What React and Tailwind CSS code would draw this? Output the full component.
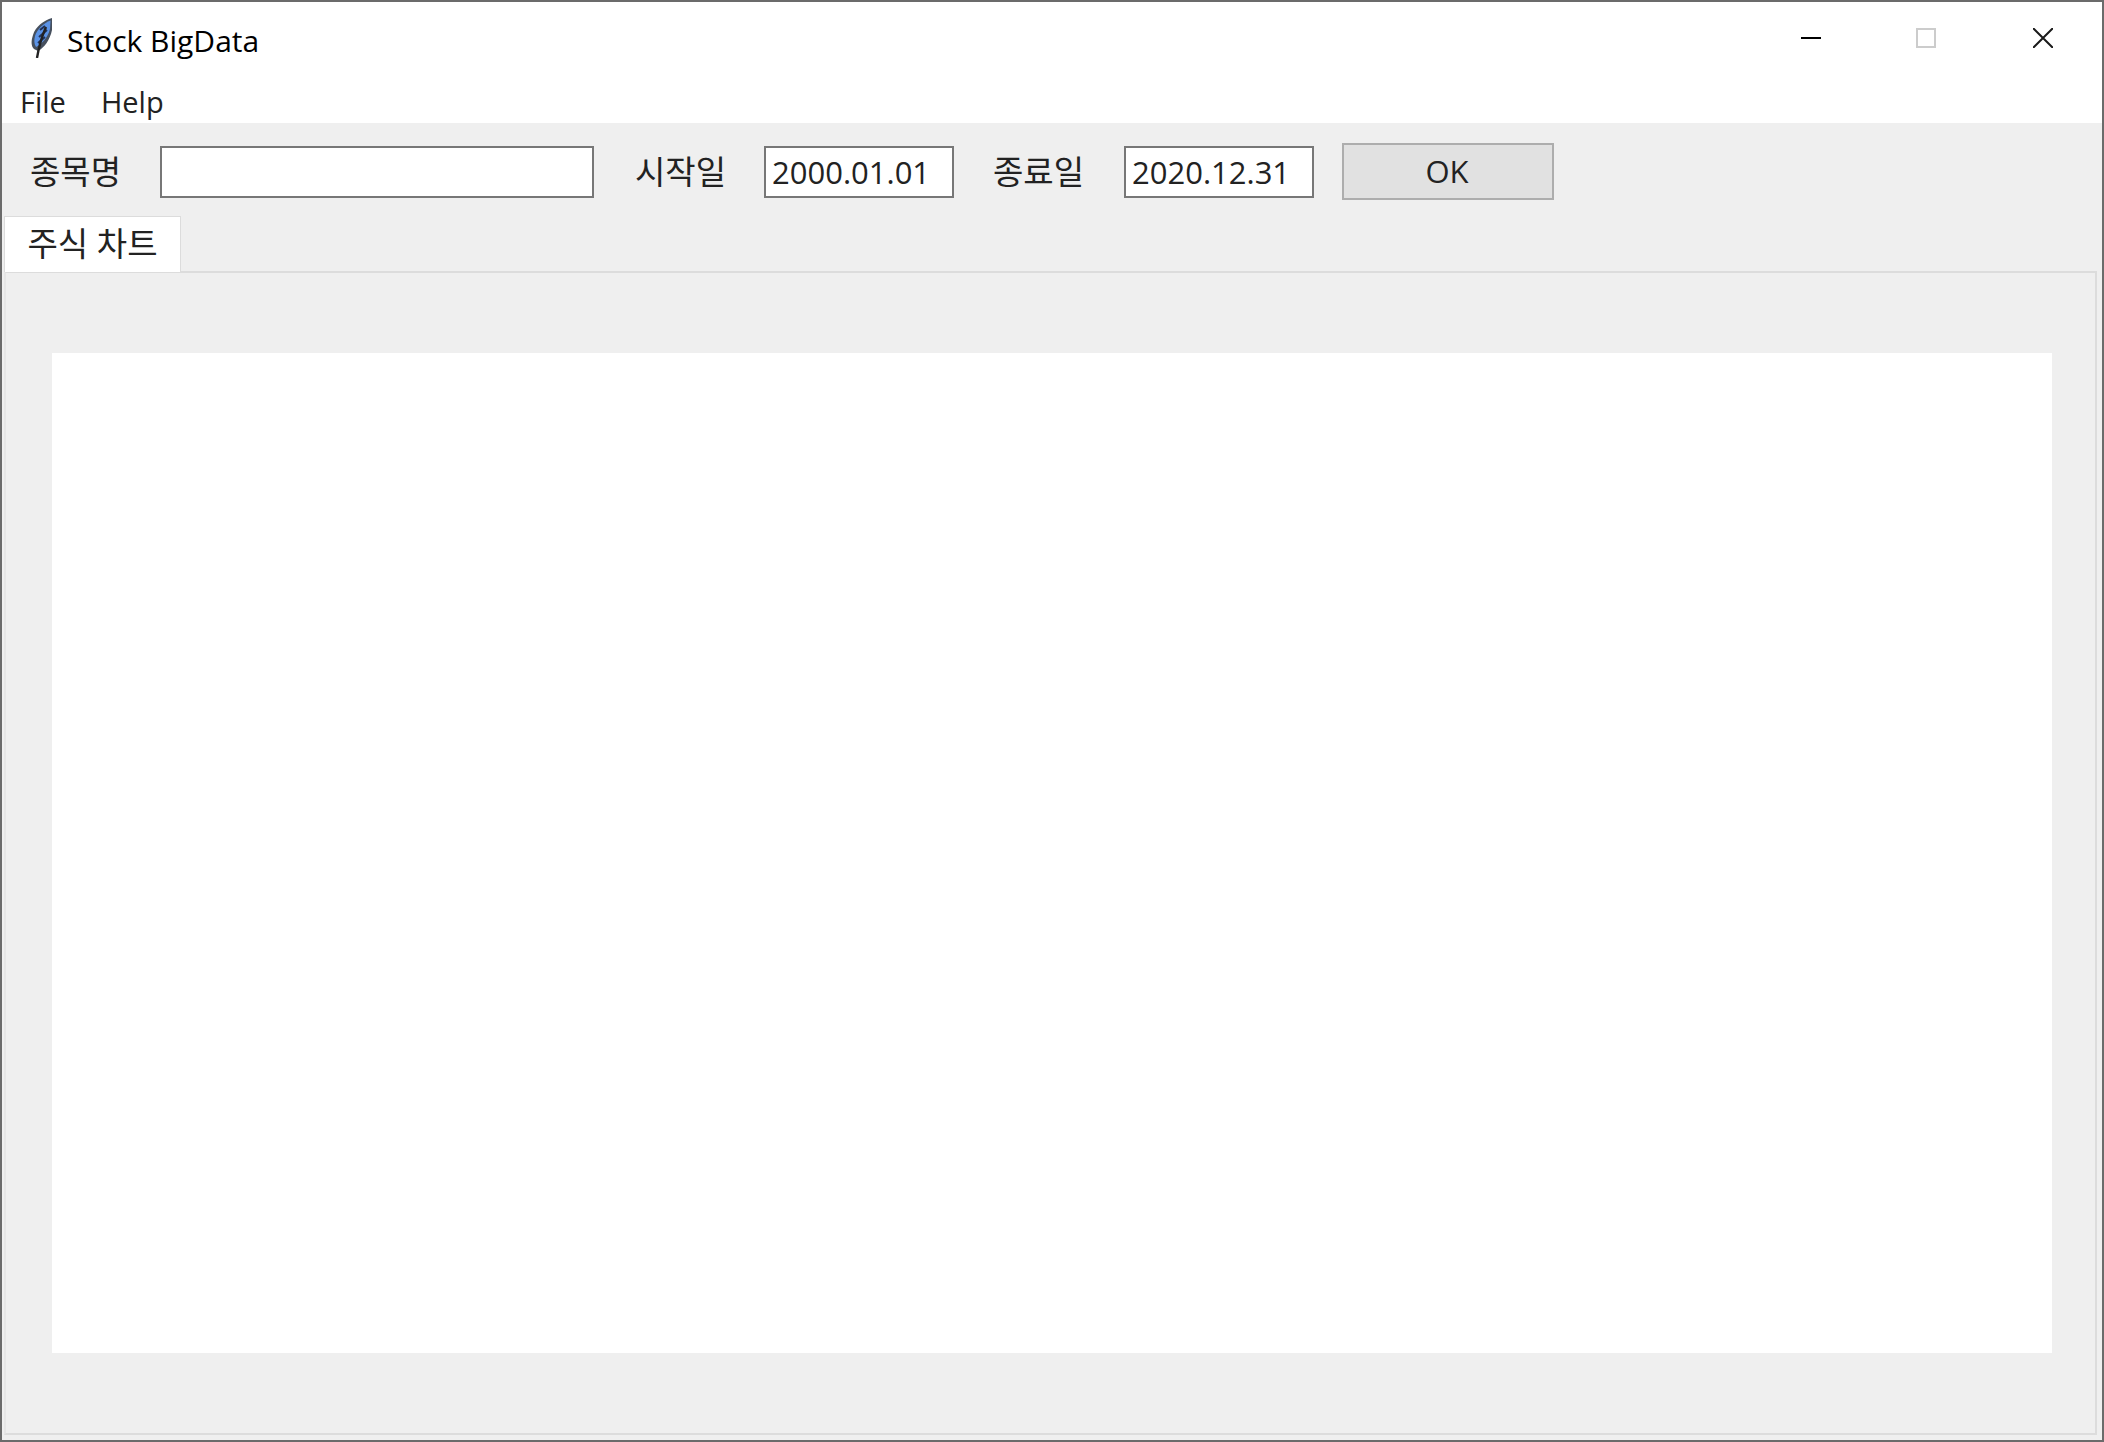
const FONT = "font-['Open_Sans','Noto_Sans_CJK_KR',sans-serif]";

function Feather() {
  return (
    <svg className="w-[22px] h-[40px] shrink-0 -mt-[7px]" viewBox="0 0 22 40">
      <path d="M21 0 C13 2 4 9 2 17 C0 23 0 28 3 31 L7 33 C13 30 19 22 21 12 Z" fill="#46505e" />
      <path d="M19.5 2.5 C13 5 6 11 4 18 C3 22 3 26 5 29 C11 26 17 19 19 11 Z" fill="#5b93e6" />
      <path d="M14 8 L9 12 M16 12 L8 19 M14 19 L7 25" stroke="#1f3158" strokeWidth="2" fill="none" />
      <path d="M15 9 C11 18 8 28 6 40" stroke="#222" strokeWidth="2.4" fill="none" />
    </svg>
  );
}

function Field({ value, className }) {
  return (
    <input
      readOnly
      value={value}
      className={`h-[52px] bg-white border-2 border-[#777777] pl-[6px] text-[31px] text-[#222] outline-none ${FONT} ${className}`}
    />
  );
}

export default function App() {
  return (
    <div className={`w-[2104px] h-[1442px] flex flex-col bg-[#efefef] border-2 border-[#6b6b6b] overflow-hidden ${FONT}`}>
      {/* Title bar */}
      <div className="h-[59px] bg-white flex items-center pl-[29px] pt-[20px] shrink-0">
        <Feather />
        <span className="ml-[14px] -mt-[2px] text-[30px] leading-[39px] text-black">Stock BigData</span>
        <div className="ml-auto flex items-center h-[20px] mr-[49px] -mt-[7px]">
          <svg className="w-[20px] h-[20px]" viewBox="0 0 20 20">
            <path d="M0 10H20" stroke="#000" strokeWidth="2" />
          </svg>
          <div className="ml-[95px] w-[20px] h-[20px] border-2 border-[#cccccc]" />
          <svg className="ml-[97px] w-[20px] h-[20px]" viewBox="0 0 20 20">
            <path d="M0 0L20 20M20 0L0 20" stroke="#1a1a1a" strokeWidth="2" />
          </svg>
        </div>
      </div>

      {/* Menu */}
      <div className="h-[62px] bg-white flex items-start pl-[18px] gap-[35px] shrink-0 text-[29px] leading-[32px] text-[#222]">
        <span className="mt-[25px]">File</span>
        <span className="mt-[25px]">Help</span>
      </div>

      {/* Inputs */}
      <div className="h-[93px] flex items-center pl-[28px] pt-[5px] text-[33px] text-[#222] shrink-0">
        <span className="w-[130px]">종목명</span>
        <Field value="" className="w-[434px]" />
        <span className="ml-[41px] w-[129px]">시작일</span>
        <Field value="2000.01.01" className="w-[190px]" />
        <span className="ml-[39px] w-[131px]">종료일</span>
        <Field value="2020.12.31" className="w-[190px]" />
        <button className="ml-[28px] -mt-[2px] w-[212px] h-[57px] bg-[#e1e1e1] border-2 border-[#adadad] pr-[2px] text-[31px] text-[#222]">
          OK
        </button>
      </div>

      {/* Tabs */}
      <div className="h-[56px] flex shrink-0 pl-[2px]">
        <div className="w-[177px] h-[56px] pb-[2px] bg-white border border-[#dcdcdc] border-b-0 flex items-center justify-center text-[33px] text-[#222] relative z-10">
          주식 차트
        </div>
      </div>

      {/* Tab pane */}
      <div className="flex-1 ml-[2px] mr-[5px] mb-[5px] -mt-[1px] border-2 border-[#dcdcdc] border-l-[#e6e6e6] pt-[80px] pl-[46px] pr-[43px] pb-[80px]">
        <div className="w-full h-full bg-white" />
      </div>
    </div>
  );
}
